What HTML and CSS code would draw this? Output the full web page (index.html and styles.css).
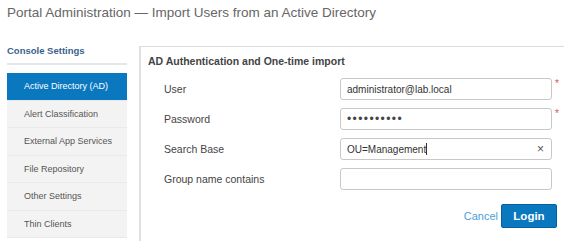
FILE: index.html
```html
<!DOCTYPE html>
<html>
<head>
    <title>Portal Administration</title>
    <link rel="stylesheet" href="styles.css">
</head>
<body>

<h1 class="page-title">Portal Administration &mdash; Import Users from an Active Directory</h1>

<div class="layout">
    <div class="sidebar">
        <div class="sidebar-title">Console Settings</div>
        <ul class="menu">
            <li class="active">Active Directory (AD)</li>
            <li>Alert Classification</li>
            <li>External App Services</li>
            <li>File Repository</li>
            <li>Other Settings</li>
            <li>Thin Clients</li>
        </ul>
    </div>

    <div class="panel">
        <h3>AD Authentication and One-time import</h3>

        <div class="form-row">
            <label>User</label>
            <div class="field"><input type="text" value="administrator@lab.local"></div>
            <span class="required">*</span>
        </div>
        <div class="form-row">
            <label>Password</label>
            <div class="field"><input type="password" class="pwd" value="secretpass"></div>
            <span class="required">*</span>
        </div>
        <div class="form-row">
            <label>Search Base</label>
            <div class="field"><input type="text" value="OU=Management"><span class="caret"></span><span class="clear">&times;</span></div>
            <span></span>
        </div>
        <div class="form-row">
            <label>Group name contains</label>
            <div class="field"><input type="text" value=""></div>
            <span></span>
        </div>

        <div class="actions">
            <a class="cancel">Cancel</a>
            <button class="login">Login</button>
        </div>
    </div>
</div>

</body>
</html>
```

FILE: styles.css
```css
body {
    font-family: "Liberation Sans", Arial, sans-serif;
    background-color: #fff;
    margin: 0;
    padding: 0 7px;
    color: #333;
    overflow: hidden;
}

.page-title {
    font-size: 13.5px;
    font-weight: normal;
    color: #666;
    margin: 0;
    padding-top: 5px;
    height: 38px;
    box-sizing: border-box;
}

.layout {
    display: flex;
    gap: 12px;
    margin-top: 3px;
}

.sidebar {
    width: 120px;
    flex: none;
}

.sidebar-title {
    font-size: 9.5px;
    font-weight: bold;
    color: #3b5f8f;
    padding: 4px 0 7px;
    border-bottom: 2px solid #e3e6ea;
}

.menu {
    list-style: none;
    margin: 8px 0 0;
    padding: 0;
    background-color: #f3f3f3;
}

.menu li {
    font-size: 9px;
    color: #555;
    height: 27.5px;
    line-height: 27.5px;
    padding-left: 17px;
    border-bottom: 1px solid #e9e9e9;
    box-sizing: border-box;
    white-space: nowrap;
}

.menu li.active {
    background-color: #0a78bf;
    color: #fff;
}

.panel {
    flex: 1;
    border-top: 1px solid #dcdcdc;
    border-left: 2px solid #dfdfe6;
    padding: 8px 0 0 7px;
    margin-top: 5px;
    height: 186px;
}

.panel h3 {
    font-size: 10.5px;
    font-weight: bold;
    color: #444;
    margin: 0 0 11px;
}

.form-row {
    display: grid;
    grid-template-columns: 176px 212px 12px;
    align-items: center;
    padding-left: 16px;
    margin-bottom: 8px;
}

.form-row label {
    font-size: 10.5px;
    color: #444;
}

.field {
    position: relative;
}

input[type="text"], input[type="password"] {
    width: 212px;
    height: 22px;
    box-sizing: border-box;
    border: 1px solid #c8c8c8;
    border-radius: 3px;
    padding: 0 6px;
    font-family: "Liberation Sans", Arial, sans-serif;
    font-size: 10px;
    color: #333;
    display: block;
}

input.pwd {
    font-size: 12px;
    letter-spacing: 1.4px;
    color: #444;
}

.caret {
    position: absolute;
    left: 86px;
    top: 5px;
    width: 1px;
    height: 12px;
    background-color: #333;
}

.clear {
    position: absolute;
    right: 8px;
    top: 4px;
    font-size: 12px;
    color: #555;
}

.required {
    color: #d9534f;
    font-size: 10px;
    padding-left: 3px;
    align-self: start;
}

.actions {
    display: flex;
    justify-content: flex-end;
    align-items: center;
    gap: 3px;
    width: 409px;
    margin-top: 14px;
}

.cancel {
    color: #4b9fd8;
    font-size: 11px;
}

.login {
    background-color: #0a78bf;
    color: #fff;
    border: 1px solid #07609a;
    border-radius: 2px;
    width: 56px;
    height: 24px;
    font-family: "Liberation Sans", Arial, sans-serif;
    font-size: 11.5px;
    font-weight: bold;
}
```
